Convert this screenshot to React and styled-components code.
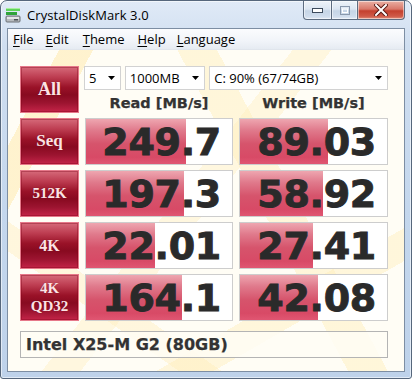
import React from 'react';
import styled, { createGlobalStyle } from 'styled-components';

const Global = createGlobalStyle`
  html, body { margin: 0; padding: 0; background: #ffffff; }
  body { width: 412px; height: 379px; overflow: hidden; }
`;

const Window = styled.div`
  width: 412px;
  height: 379px;
  box-sizing: border-box;
  border: 1px solid #56677c;
  border-radius: 7px 7px 3px 3px;
  background: linear-gradient(to bottom, #e0eaf7 0%, #cfdef0 12%, #c4d7ed 55%, #bed2ea 100%);
  box-shadow: inset 0 0 0 1px rgba(255, 255, 255, 0.55);
  display: flex;
  flex-direction: column;
  font-family: "Open Sans", "Noto Sans", sans-serif;
`;

const TitleBar = styled.div`
  height: 27px;
  display: flex;
  align-items: flex-start;
  padding-left: 4px;
  flex-shrink: 0;
`;

const TitleIcon = styled.svg`
  margin-top: 6px;
  flex-shrink: 0;
`;

const TitleText = styled.div`
  align-self: center;
  margin-left: 6px;
  font-size: 13px;
  color: #000;
  letter-spacing: 0.1px;
`;

const Captions = styled.div`
  margin-left: auto;
  margin-right: 6px;
  display: flex;
  height: 19px;
`;

const CapButton = styled.div`
  width: ${(p) => p.$w}px;
  height: 19px;
  box-sizing: border-box;
  border: 1px solid #5d6c80;
  border-left-width: ${(p) => (p.$first ? 1 : 0)}px;
  border-top: none;
  border-radius: ${(p) => p.$radius};
  background: ${(p) =>
    p.$close
      ? 'linear-gradient(to bottom, #eab0a4 0%, #d9786a 45%, #c4402e 55%, #cf5a48 85%, #e0907c 100%)'
      : 'linear-gradient(to bottom, #eef3f9 0%, #dce6f2 45%, #c6d5e6 55%, #cfdcec 85%, #e2eaf5 100%)'};
  box-shadow: inset 0 0 0 1px rgba(255, 255, 255, 0.5);
  display: flex;
  align-items: center;
  justify-content: center;
`;

const Client = styled.div`
  flex: 1;
  margin: 0 6px 6px 6px;
  border: 1px solid #7d8ea3;
  display: flex;
  flex-direction: column;
  min-height: 0;
`;

const MenuBar = styled.div`
  height: 21px;
  flex-shrink: 0;
  display: flex;
  align-items: center;
  background: linear-gradient(to bottom, #fbfcfe 0%, #f1f4f9 60%, #e6ebf2 100%);
  border-bottom: 1px solid #e0e5ec;
  box-sizing: border-box;
`;

const MenuItem = styled.div`
  font-size: 13px;
  color: #000;
  padding: 0 ${(p) => p.$pad}px 0 ${(p) => p.$padL}px;
  & u { text-decoration: underline; text-underline-offset: 2px; }
`;

const Main = styled.div`
  flex: 1;
  padding: 16px 0 0 12px;
  background-color: #fffdf5;
  background-image:
    linear-gradient(118deg, transparent 0 9%, rgba(255, 234, 175, 0.55) 9% 15%, transparent 15% 100%),
    linear-gradient(62deg, transparent 0 60%, rgba(255, 238, 185, 0.45) 60% 67%, transparent 67% 100%),
    linear-gradient(128deg, transparent 0 44%, rgba(255, 238, 190, 0.4) 44% 50%, transparent 50% 100%),
    linear-gradient(150deg, transparent 0 74%, rgba(255, 236, 180, 0.4) 74% 80%, transparent 80% 100%),
    linear-gradient(35deg, transparent 0 20%, rgba(255, 238, 192, 0.45) 20% 25%, transparent 25% 100%);
  display: flex;
  flex-direction: column;
`;

const Board = styled.div`
  display: grid;
  grid-template-columns: 59px 148px 149px;
  grid-auto-rows: 47px;
  column-gap: 6px;
  row-gap: 5px;
`;

const SideButton = styled.div`
  box-sizing: border-box;
  border: 1px solid #e6788a;
  box-shadow: inset 0 0 0 1px rgba(120, 0, 20, 0.35);
  background: linear-gradient(
    to bottom,
    #d66a7a 0%,
    #be3e52 22%,
    #9a1228 45%,
    #880a20 62%,
    #9c1430 80%,
    #c42448 100%
  );
  display: flex;
  align-items: center;
  justify-content: center;
  text-align: center;
  font-family: "Liberation Serif", "DejaVu Serif", serif;
  font-weight: bold;
  font-size: ${(p) => p.$size || 17}px;
  line-height: ${(p) => p.$lh || 1.1};
  color: #fde2e4;
  text-shadow: 0 0 1px rgba(80, 0, 10, 0.6);
`;

const TopRight = styled.div`
  grid-column: 2 / 4;
  display: flex;
  flex-direction: column;
`;

const SelectRow = styled.div`
  display: flex;
  gap: 4px;
  margin-left: -1px;
  height: 24px;
`;

const Select = styled.div`
  width: ${(p) => p.$w}px;
  box-sizing: border-box;
  border: 1px solid #d2d2d2;
  background: #ffffff;
  display: flex;
  align-items: center;
  padding: 0 5px 0 4px;
  font-size: 13px;
  color: #000;
  & span { flex: 1; }
`;

const HeaderRow = styled.div`
  flex: 1;
  display: grid;
  grid-template-columns: 148px 149px;
  column-gap: 6px;
  align-items: center;
  padding-top: 3px;
`;

const Header = styled.div`
  text-align: center;
  font-family: "DejaVu Sans", sans-serif;
  font-weight: bold;
  font-size: 14.5px;
  color: #333333;
  -webkit-text-stroke: 0.25px #333333;
`;

const Cell = styled.div`
  box-sizing: border-box;
  border: 1px solid #cdcdcd;
  background-color: #ffffff;
  background-image: linear-gradient(
    to bottom,
    #eea6b0 0%,
    #e07a8c 25%,
    #d6546c 55%,
    #d84a66 85%,
    #e05672 100%
  );
  background-repeat: no-repeat;
  background-position: left top;
  display: flex;
  align-items: center;
  justify-content: flex-end;
  padding-right: 11px;
  font-family: "DejaVu Sans", sans-serif;
  font-weight: bold;
  font-size: 38px;
  color: #2a2a2a;
  -webkit-text-stroke: 0.9px #2a2a2a;
  letter-spacing: -0.3px;
`;

const Comment = styled.div`
  margin-top: 10px;
  width: 368px;
  height: 27px;
  box-sizing: border-box;
  border: 1px solid #b4b4b4;
  background: rgba(255, 253, 244, 0.85);
  display: flex;
  align-items: center;
  padding-left: 5px;
  font-family: "DejaVu Sans", sans-serif;
  font-weight: bold;
  font-size: 16px;
  color: #333333;
  -webkit-text-stroke: 0.25px #333333;
`;

const Arrow = () => (
  <svg width="7" height="4" viewBox="0 0 7 4">
    <polygon points="0,0 7,0 3.5,4" fill="#000" />
  </svg>
);

const rows = [
  { label: 'Seq', size: 17, read: '249.7', write: '89.03', r: 100, w: 88 },
  { label: '512K', size: 15, read: '197.3', write: '58.92', r: 98, w: 83 },
  { label: '4K', size: 16, read: '22.01', write: '27.41', r: 69, w: 73 },
  { label: '4K\nQD32', size: 15, lh: 1.15, read: '164.1', write: '42.08', r: 96, w: 78 },
];

export default function App() {
  return (
    <>
      <Global />
      <Window>
        <TitleBar>
          <TitleIcon width="16" height="16" viewBox="0 0 16 16">
            <rect x="1" y="1" width="14" height="3" fill="#5fd35a" />
            <rect x="1" y="1" width="14" height="1" fill="#a8f0a0" />
            <rect x="1" y="5" width="11" height="3" fill="#2fa43a" />
            <rect x="1" y="9" width="14" height="6" rx="1" fill="#b8bcc0" stroke="#6a7076" strokeWidth="1" />
            <rect x="2" y="10" width="12" height="2" fill="#e4e6e8" />
            <rect x="9" y="12" width="4" height="1.5" fill="#4a5056" />
          </TitleIcon>
          <TitleText>CrystalDiskMark 3.0</TitleText>
          <Captions>
            <CapButton $w={29} $first $radius="0 0 0 4px">
              <svg width="11" height="5" viewBox="0 0 11 5">
                <rect x="0.5" y="0.5" width="10" height="4" fill="#fff" stroke="#3c4a5c" />
              </svg>
            </CapButton>
            <CapButton $w={26} $radius="0">
              <svg width="10" height="9" viewBox="0 0 10 9">
                <rect x="0.5" y="0.5" width="9" height="8" fill="none" stroke="#8a99ad" />
                <rect x="2.5" y="3" width="5" height="3.5" fill="none" stroke="#ffffff" />
              </svg>
            </CapButton>
            <CapButton $w={47} $close $radius="0 0 4px 0">
              <svg width="14" height="12" viewBox="0 0 14 12">
                <path d="M2 1 L12 11 M12 1 L2 11" stroke="#5a1a14" strokeWidth="4" strokeLinecap="square" />
                <path d="M2 1 L12 11 M12 1 L2 11" stroke="#ffffff" strokeWidth="2" strokeLinecap="square" />
              </svg>
            </CapButton>
          </Captions>
        </TitleBar>
        <Client>
          <MenuBar>
            <MenuItem $padL={5} $pad={6}><u>F</u>ile</MenuItem>
            <MenuItem $padL={6} $pad={7}><u>E</u>dit</MenuItem>
            <MenuItem $padL={7} $pad={7}><u>T</u>heme</MenuItem>
            <MenuItem $padL={6} $pad={6}><u>H</u>elp</MenuItem>
            <MenuItem $padL={5} $pad={7}><u>L</u>anguage</MenuItem>
          </MenuBar>
          <Main>
            <Board>
              <SideButton $size={18}>All</SideButton>
              <TopRight>
                <SelectRow>
                  <Select $w={37}><span>5</span><Arrow /></Select>
                  <Select $w={81}><span>1000MB</span><Arrow /></Select>
                  <Select $w={180}><span>C: 90% (67/74GB)</span><Arrow /></Select>
                </SelectRow>
                <HeaderRow>
                  <Header>Read [MB/s]</Header>
                  <Header>Write [MB/s]</Header>
                </HeaderRow>
              </TopRight>
              {rows.map((row) => (
                <React.Fragment key={row.label}>
                  <SideButton $size={row.size} $lh={row.lh}>
                    {row.label.split('\n').map((t, i) => (
                      <React.Fragment key={i}>
                        {i > 0 && <br />}
                        {t}
                      </React.Fragment>
                    ))}
                  </SideButton>
                  <Cell style={{ backgroundSize: `${row.r}px 100%` }}>{row.read}</Cell>
                  <Cell style={{ backgroundSize: `${row.w}px 100%` }}>{row.write}</Cell>
                </React.Fragment>
              ))}
            </Board>
            <Comment>Intel X25-M G2 (80GB)</Comment>
          </Main>
        </Client>
      </Window>
    </>
  );
}
